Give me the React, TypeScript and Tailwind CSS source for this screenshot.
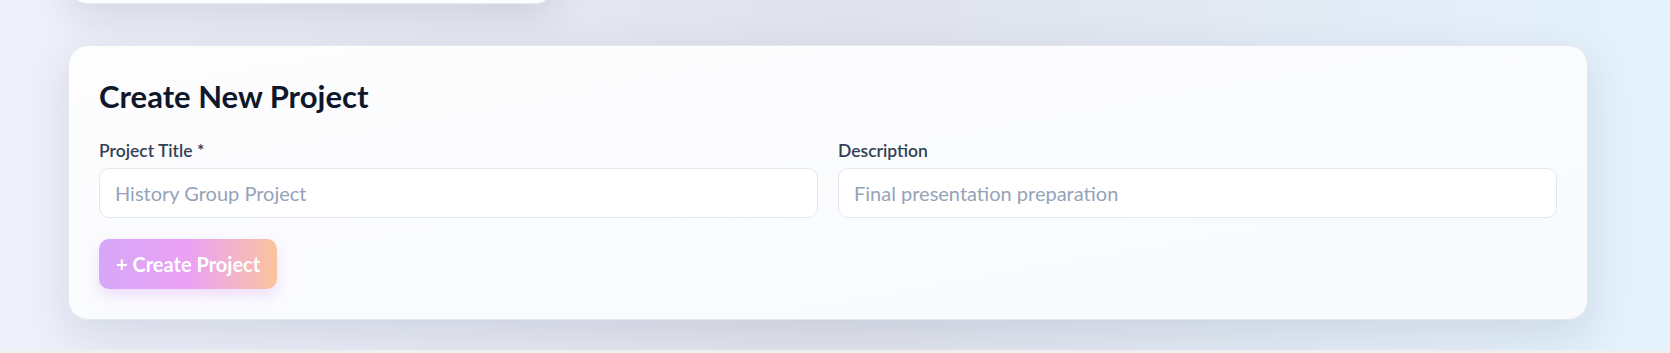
import React from "react";

const App = () => {
  return (
    <div
      className="w-full h-[353px] overflow-hidden bg-gradient-to-r from-[#eef1fb] via-[#e0e2ec] to-[#e4f2fc] flex flex-col"
      style={{ fontFamily: "Lato, 'Noto Sans', sans-serif" }}
    >
      <div className="flex-1 pl-[68px] pr-[82px] pb-[30px] flex flex-col">
        <div className="grid grid-cols-3 gap-[30px] -mt-[40px]">
          <div className="h-[44px] bg-white/90 rounded-[20px] border border-[#e8eaf0] shadow-[0_12px_36px_rgba(90,80,120,0.16)]" />
        </div>

        <div className="mt-[41px] bg-gradient-to-br from-[#fdfdfe] to-[#f8fafd] rounded-[20px] border border-[#e4e8ee] shadow-[0_14px_44px_rgba(80,100,130,0.16)] p-[30px]">
          <h2 className="text-[31px] leading-[40px] font-bold text-[#0f172a]">
            Create New Project
          </h2>

          <div className="grid grid-cols-2 gap-[20px] mt-[22px]">
            <div className="flex flex-col">
              <label className="text-[17.5px] leading-[25px] font-semibold text-[#334155] mb-[5px]">
                Project Title *
              </label>
              <input
                className="h-[50px] rounded-[10px] border border-[#e2e8f0] bg-white px-[15px] text-[20px] text-[#0f172a] placeholder:text-[#94a3b8] outline-none"
                placeholder="History Group Project"
              />
            </div>
            <div className="flex flex-col">
              <label className="text-[17.5px] leading-[25px] font-semibold text-[#334155] mb-[5px]">
                Description
              </label>
              <input
                className="h-[50px] rounded-[10px] border border-[#e2e8f0] bg-white px-[15px] text-[20px] text-[#0f172a] placeholder:text-[#94a3b8] outline-none"
                placeholder="Final presentation preparation"
              />
            </div>
          </div>

          <button className="mt-[21px] h-[50px] px-[17px] rounded-[10px] bg-gradient-to-r from-[#d7a7f7] via-[#eaa0f5] to-[#fbc39a] text-white text-[20px] font-bold shadow-[0_6px_14px_rgba(216,160,245,0.35)]">
            + Create Project
          </button>
        </div>
      </div>
      <div className="h-[5px] bg-[#efeff2]" />
    </div>
  );
};

export default App;
